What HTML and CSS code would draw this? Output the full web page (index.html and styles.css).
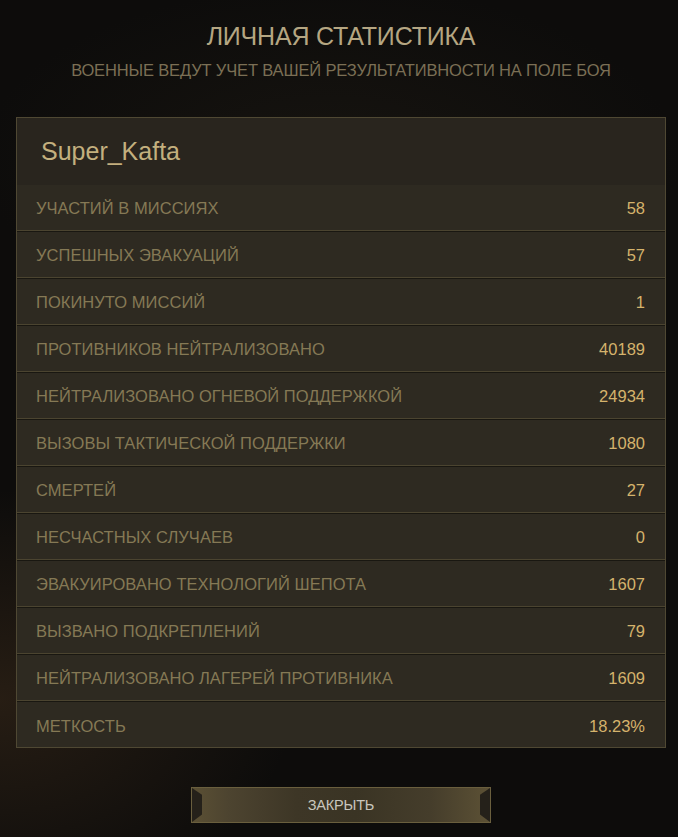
FILE: index.html
```html
<!DOCTYPE html>
<html lang="ru">
<head>
<meta charset="utf-8">
<link rel="stylesheet" href="styles.css">
</head>
<body>
<div class="page">
  <header class="head">
    <h1 class="title">ЛИЧНАЯ СТАТИСТИКА</h1>
    <p class="subtitle">ВОЕННЫЕ ВЕДУТ УЧЕТ ВАШЕЙ РЕЗУЛЬТАТИВНОСТИ НА ПОЛЕ БОЯ</p>
  </header>
  <section class="panel">
    <div class="name">Super_Kafta</div>
    <div class="row"><span class="label">УЧАСТИЙ В МИССИЯХ</span><span class="value">58</span></div>
    <div class="row"><span class="label">УСПЕШНЫХ ЭВАКУАЦИЙ</span><span class="value">57</span></div>
    <div class="row"><span class="label">ПОКИНУТО МИССИЙ</span><span class="value">1</span></div>
    <div class="row"><span class="label">ПРОТИВНИКОВ НЕЙТРАЛИЗОВАНО</span><span class="value">40189</span></div>
    <div class="row"><span class="label">НЕЙТРАЛИЗОВАНО ОГНЕВОЙ ПОДДЕРЖКОЙ</span><span class="value">24934</span></div>
    <div class="row"><span class="label">ВЫЗОВЫ ТАКТИЧЕСКОЙ ПОДДЕРЖКИ</span><span class="value">1080</span></div>
    <div class="row"><span class="label">СМЕРТЕЙ</span><span class="value">27</span></div>
    <div class="row"><span class="label">НЕСЧАСТНЫХ СЛУЧАЕВ</span><span class="value">0</span></div>
    <div class="row"><span class="label">ЭВАКУИРОВАНО ТЕХНОЛОГИЙ ШЕПОТА</span><span class="value">1607</span></div>
    <div class="row"><span class="label">ВЫЗВАНО ПОДКРЕПЛЕНИЙ</span><span class="value">79</span></div>
    <div class="row"><span class="label">НЕЙТРАЛИЗОВАНО ЛАГЕРЕЙ ПРОТИВНИКА</span><span class="value">1609</span></div>
    <div class="row last"><span class="label">МЕТКОСТЬ</span><span class="value">18.23%</span></div>
  </section>
  <div class="actions">
    <button class="close">
      <span class="cap cap-left"></span>
      <span class="btn-text">ЗАКРЫТЬ</span>
      <span class="cap cap-right"></span>
    </button>
  </div>
</div>
</body>
</html>
```
FILE: styles.css
```css
* { box-sizing: border-box; }
html, body {
  margin: 0;
  padding: 0;
  width: 678px;
  height: 837px;
  overflow: hidden;
}
body {
  background:
    radial-gradient(ellipse 420px 300px at 0px 700px, rgba(70, 50, 30, 0.45), rgba(0,0,0,0) 70%),
    radial-gradient(ellipse 500px 250px at 330px 160px, rgba(40, 34, 24, 0.35), rgba(0,0,0,0) 70%),
    #0d0c0b;
  font-family: "Liberation Sans", Arial, sans-serif;
}
.page {
  display: flex;
  flex-direction: column;
  align-items: center;
  padding-left: 4px;
}
.head {
  display: flex;
  flex-direction: column;
  align-items: center;
  padding-top: 21px;
}
.title {
  margin: 0;
  font-family: "Liberation Sans Narrow", "Liberation Sans", sans-serif;
  font-weight: normal;
  font-size: 25px;
  line-height: 30px;
  letter-spacing: -0.2px;
  color: #b5a682;
}
.subtitle {
  margin: 9px 0 0;
  font-family: "Liberation Sans Narrow", "Liberation Sans", sans-serif;
  font-size: 16.5px;
  line-height: 20px;
  letter-spacing: -0.15px;
  color: #7b6f55;
}
.panel {
  margin-top: 37px;
  width: 650px;
  border: 1px solid #4f4833;
  background: #2e2a21;
  display: flex;
  flex-direction: column;
}
.name {
  height: 67px;
  background: #29251e;
  padding-left: 24px;
  display: flex;
  align-items: center;
  font-family: "Liberation Sans", sans-serif;
  font-size: 25px;
  color: #c3b07e;
  padding-bottom: 1px;
}
.row {
  height: 47px;
  display: flex;
  align-items: center;
  justify-content: space-between;
  padding: 1px 20px 0 19px;
  border-bottom: 1px solid #191711;
  box-shadow: inset 0 -1px 0 #4b4430;
}
.row.last {
  border-bottom: none;
  box-shadow: none;
  height: 45px;
  padding-top: 3px;
}
.label {
  font-size: 16.5px;
  color: #857955;
  letter-spacing: 0.05px;
}
.value {
  font-size: 16.5px;
  color: #d5b36c;
}
.actions {
  margin-top: 39px;
}
.close {
  position: relative;
  width: 300px;
  height: 36px;
  padding: 0;
  border: 1px solid #6a5f3e;
  background: linear-gradient(to right, #5b5034 0%, #4d4430 12%, #3d3626 35%, #3a3424 55%, #453d2b 80%, #5c5135 100%);
  display: flex;
  align-items: center;
  justify-content: center;
  cursor: pointer;
}
.btn-text {
  font-family: "Liberation Sans", sans-serif;
  font-size: 14.5px;
  color: #c9c6bd;
  letter-spacing: -0.2px;
}
.cap {
  position: absolute;
  top: 0;
  width: 10px;
  height: 34px;
  background: #25211a;
}
.cap-left {
  left: 0;
  clip-path: polygon(0 0, 100% 20%, 100% 78%, 0 100%);
}
.cap-right {
  right: 0;
  clip-path: polygon(100% 0, 0 20%, 0 78%, 100% 100%);
}
```
